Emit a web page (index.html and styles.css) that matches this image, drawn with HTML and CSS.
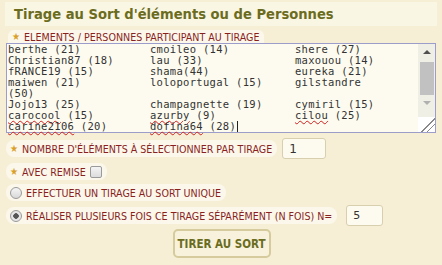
FILE: index.html
```html
<!DOCTYPE html>
<html lang="fr">

<head>
  <meta charset="UTF-8">
  <title>Tirage au Sort</title>
  <link rel="stylesheet" href="styles.css">
</head>

<body>
  <div class="page">
    <div class="header">
      <h1>Tirage au Sort d'éléments ou de Personnes</h1>
    </div>

    <div class="label first"><span class="star">&#9733;</span> ELEMENTS / PERSONNES PARTICIPANT AU TIRAGE</div>
    <div class="box">
      <div class="lines">
        <div class="row"><span>berthe (21)</span><span>cmoileo (14)</span><span>shere (27)</span></div>
        <div class="row"><span>Christian87 (18)</span><span>lau (33)</span><span>maxouou (14)</span></div>
        <div class="row"><span>fRANCE19 (15)</span><span>shama(44)</span><span>eureka (21)</span></div>
        <div class="row"><span>maiwen (21)</span><span>loloportugal (15)</span><span>gilstandre</span></div>
        <div class="row"><span>(50)</span><span></span><span></span></div>
        <div class="row"><span>Jojo13 (25)</span><span>champagnette (19)</span><span>cymiril (15)</span></div>
        <div class="row"><span><u>carocool</u> (15)</span><span><u>azurby</u> (9)</span><span><u>cilou</u> (25)</span></div>
        <div class="row"><span><u>carine2106</u> (20)</span><span><u>dofina64</u> (28)<i class="caret"></i></span><span></span></div>
      </div>
      <div class="scrollbar">
        <div class="arrow up"></div>
        <div class="thumb"></div>
        <div class="arrow down"></div>
        <div class="grip"></div>
      </div>
    </div>

    <div class="line count">
      <div class="label"><span class="star">&#9733;</span> NOMBRE D'ÉLÉMENTS À SÉLECTIONNER PAR TIRAGE</div>
      <div class="field small">1</div>
    </div>

    <div class="line">
      <div class="label"><span class="star">&#9733;</span> AVEC REMISE <span class="check"></span></div>
    </div>

    <div class="line">
      <div class="label"><span class="radio"></span> EFFECTUER UN TIRAGE AU SORT UNIQUE</div>
    </div>

    <div class="line">
      <div class="label"><span class="radio on"></span> RÉALISER PLUSIEURS FOIS CE TIRAGE SÉPARÉMENT (N FOIS) N=</div>
      <div class="field n">5</div>
    </div>

    <div class="actions">
      <button>TIRER AU SORT</button>
    </div>
  </div>
</body>

</html>
```

FILE: styles.css
```css
* {
  margin: 0;
  padding: 0;
  box-sizing: border-box;
}

body {
  background: #f6efd6;
  font-family: 'DejaVu Sans Condensed', 'Liberation Sans', sans-serif;
  font-size: 10.6px;
  color: #8a1f1f;
}

.page {
  padding: 2px 6px 0 6px;
}

.header {
  background: #faf6e4;
  height: 24px;
  margin: 0 0 4px -1px;
  width: 432px;
  padding: 3px 0 0 9px;
}

h1 {
  font-family: 'DejaVu Sans Condensed', 'Liberation Sans', sans-serif;
  font-size: 14.6px;
  font-weight: bold;
  color: #6b6c1e;
}

.label {
  display: inline-flex;
  align-items: center;
  gap: 4px;
  background: #fbf7ea;
  border-radius: 8px;
  padding: 0 5px 0 4px;
  height: 17px;
  white-space: nowrap;
}

.label.first {
  height: 13px;
  border-radius: 6px 6px 0 0;
  margin-left: 2px;
}

.star {
  color: #d9a02c;
  font-size: 10px;
}

.box {
  display: flex;
  width: 430px;
  height: 90px;
  border: 1px solid #9d9dcc;
  background: #fdfbef;
}

.lines {
  flex: 1;
  padding: 0 0 0 1px;
  font-family: 'DejaVu Sans Mono', monospace;
  font-size: 10.5px;
  letter-spacing: 0.3px;
  line-height: 11px;
  color: #333;
}

.row {
  display: grid;
  grid-template-columns: 142px 145px 1fr;
  white-space: pre;
}

.row u {
  text-decoration: underline wavy #d02020;
  text-decoration-thickness: 1px;
  text-underline-offset: 1px;
}

.caret {
  display: inline-block;
  width: 1px;
  height: 11px;
  background: #222;
  vertical-align: -2px;
  margin-left: 1px;
}

.scrollbar {
  width: 17px;
  display: flex;
  flex-direction: column;
  background: #f0efe6;
}

.arrow {
  height: 15px;
  display: flex;
  justify-content: center;
  align-items: center;
}

.arrow.up::before {
  content: '';
  border: 4px solid transparent;
  border-bottom: 4px solid #505050;
  border-top: 0;
}

.arrow.down::before {
  content: '';
  border: 4px solid transparent;
  border-top: 4px solid #b0b0b0;
  border-bottom: 0;
}

.thumb {
  height: 33px;
  margin: 3px 1px 0 2px;
  background: #c1c1c1;
}

.grip {
  margin-top: auto;
  height: 15px;
  background: #fff linear-gradient(135deg, transparent 55%, #888 56%, #888 60%, transparent 61%, transparent 72%, #888 73%, #888 77%, transparent 78%);
}

.line {
  display: flex;
  align-items: center;
  gap: 5px;
  margin-top: 4px;
}

.line.count {
  margin-top: 5px;
}

.field {
  background: #fdfbef;
  border: 1px solid #d8cfae;
  border-radius: 3px;
  height: 21px;
  padding: 3px 6px;
  font-family: 'DejaVu Sans', sans-serif;
  font-size: 12px;
  color: #333;
}

.small {
  width: 44px;
}

.n {
  width: 37px;
  font-size: 11px;
  margin-left: 4px;
}

.check {
  display: inline-block;
  width: 12px;
  height: 12px;
  border: 1px solid #9a9a9a;
  border-radius: 2px;
  background: linear-gradient(#f4f4f4, #dcdcdc);
}

.radio {
  display: inline-block;
  width: 12px;
  height: 12px;
  border: 1px solid #9a9a9a;
  border-radius: 50%;
  background: linear-gradient(#f6f6f6, #d8d8d8);
}

.radio.on {
  background: radial-gradient(circle, #555 0 2.5px, #e6e6e6 3px);
}

.actions {
  display: flex;
  justify-content: center;
  margin-top: 3px;
}

button {
  width: 98px;
  height: 29px;
  background: #f8f2dc;
  border: 2px solid #d6cb9c;
  border-radius: 5px;
  font-family: 'DejaVu Sans Condensed', 'Liberation Sans', sans-serif;
  font-weight: bold;
  font-size: 11.5px;
  color: #6b6c1e;
  white-space: nowrap;
  margin-left: 1px;
}
```
